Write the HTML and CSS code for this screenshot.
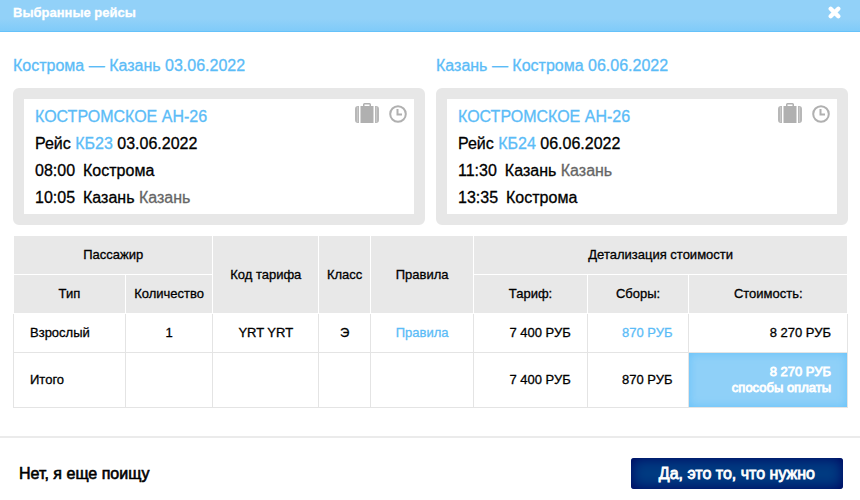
FILE: index.html
```
<!DOCTYPE html>
<html lang="ru">
<head>
  <meta charset="UTF-8" />
  <title>Выбранные рейсы</title>
  <link rel="stylesheet" href="styles.css">
</head>
<body>
  <svg class="sprite" width="0" height="0" aria-hidden="true">
    <symbol id="icon-bag" viewBox="0 0 24 20">
      <path d="M4 3v17H3a3 3 0 0 1-3-3V6a3 3 0 0 1 3-3zM20 3v17h1a3 3 0 0 0 3-3V6a3 3 0 0 0-3-3z" fill="#b8b8b8"/>
      <path d="M2.500 4v15M21.500 4v15" stroke="#c8c8c8" stroke-width="1"/>
      <path d="M5.500 3H8V1.500Q8 0 9.500 0h5Q16 0 16 1.500V3h2.500v17h-13zM9.500 3h5V1.500h-5z" fill="#b0b0b0" fill-rule="evenodd"/>
    </symbol>
    <symbol id="icon-clock" viewBox="0 0 18 18">
      <circle cx="9" cy="9" r="7.800" fill="none" stroke="#b0b0b0" stroke-width="2"/>
      <path d="M8.500 4v5.500H13" fill="none" stroke="#b0b0b0" stroke-width="2"/>
    </symbol>
  </svg>

  <header class="header">
    <h1>Выбранные рейсы</h1>
    <button class="close" aria-label="Закрыть">
      <svg width="13" height="13" viewBox="0 0 12 12"><path d="M2.500 2.500l7 7M9.500 2.500l-7 7" stroke="#fff" stroke-width="4" stroke-linecap="round"/></svg>
    </button>
  </header>

  <main class="content">
    <div class="flights">
      <section class="flight">
        <h2>Кострома — Казань 03.06.2022</h2>
        <div class="card">
          <div class="info">
            <p class="company">КОСТРОМСКОЕ АН-26</p>
            <p>Рейс <a href="#">КБ23</a> 03.06.2022</p>
            <p><span class="time">08:00</span>Кострома</p>
            <p><span class="time">10:05</span>Казань <span class="airport">Казань</span></p>
          </div>
          <div class="icons">
            <svg class="bag"><use href="#icon-bag"/></svg>
            <svg class="clock"><use href="#icon-clock"/></svg>
          </div>
        </div>
      </section>

      <section class="flight">
        <h2>Казань — Кострома 06.06.2022</h2>
        <div class="card">
          <div class="info">
            <p class="company">КОСТРОМСКОЕ АН-26</p>
            <p>Рейс <a href="#">КБ24</a> 06.06.2022</p>
            <p><span class="time">11:30</span>Казань <span class="airport">Казань</span></p>
            <p><span class="time">13:35</span>Кострома</p>
          </div>
          <div class="icons">
            <svg class="bag"><use href="#icon-bag"/></svg>
            <svg class="clock"><use href="#icon-clock"/></svg>
          </div>
        </div>
      </section>
    </div>

    <table class="prices">
      <colgroup>
        <col class="col-type">
        <col class="col-count">
        <col class="col-code">
        <col class="col-class">
        <col class="col-rules">
        <col class="col-fare">
        <col class="col-tax">
        <col class="col-total">
      </colgroup>
      <thead>
        <tr>
          <th colspan="2">Пассажир</th>
          <th rowspan="2">Код тарифа</th>
          <th rowspan="2">Класс</th>
          <th rowspan="2">Правила</th>
          <th colspan="3">Детализация стоимости</th>
        </tr>
        <tr>
          <th>Тип</th>
          <th>Количество</th>
          <th>Тариф:</th>
          <th>Сборы:</th>
          <th>Стоимость:</th>
        </tr>
      </thead>
      <tbody>
        <tr>
          <td class="name">Взрослый</td>
          <td>1</td>
          <td>YRT YRT</td>
          <td>Э</td>
          <td><a href="#">Правила</a></td>
          <td class="sum">7 400 РУБ</td>
          <td class="sum"><a href="#">870 РУБ</a></td>
          <td class="sum">8 270 РУБ</td>
        </tr>
        <tr class="total">
          <td class="name">Итого</td>
          <td></td>
          <td></td>
          <td></td>
          <td></td>
          <td class="sum">7 400 РУБ</td>
          <td class="sum">870 РУБ</td>
          <td class="sum pay">8 270 РУБ<br><a href="#">способы оплаты</a></td>
        </tr>
      </tbody>
    </table>
  </main>

  <footer class="footer">
    <button class="cancel">Нет, я еще поищу</button>
    <button class="confirm">Да, это то, что нужно</button>
  </footer>
</body>
</html>
```
FILE: styles.css
```
* {
  box-sizing: border-box;
}
body {
  margin: 0;
  font-family: "Liberation Sans", Arial, sans-serif;
  font-size: 16px;
  color: #000;
  background-color: #fff;
  -webkit-text-stroke: 0.3px;
}
a {
  color: #5bbcf7;
  text-decoration: none;
}
button {
  font-family: inherit;
  font-size: 16px;
  border: none;
  cursor: pointer;
  -webkit-text-stroke: inherit;
}
.sprite {
  position: absolute;
}
.header {
  display: flex;
  justify-content: space-between;
  align-items: center;
  height: 32px;
  padding: 0 19px 6px 13px;
  background: linear-gradient(#92d1f8 60%, #80cbf9);
  border-bottom: 1px solid #66c2fa;
}
.header h1 {
  margin: 0;
  font-size: 13px;
  color: #fff;
}
.close {
  display: flex;
  padding: 0;
  background: none;
}
.content {
  padding: 20px 12px 28px 13px;
}
.flights {
  display: flex;
  gap: 11px;
  margin-bottom: 10px;
}
.flight {
  flex: 1;
}
.flight h2 {
  margin: 0 0 9px;
  font-size: 16px;
  font-weight: normal;
  line-height: 27px;
  color: #5bbcf7;
}
.card {
  display: flex;
  justify-content: space-between;
  padding: 4px 7px 3px 11px;
  border: 11px solid #e7e7e7;
  border-radius: 6px;
}
.card p {
  margin: 0;
  line-height: 27px;
}
.card .company {
  color: #5bbcf7;
}
.time {
  margin-right: 8px;
}
.airport {
  color: #666;
}
.icons {
  display: flex;
  gap: 10px;
}
.bag {
  width: 24px;
  height: 20px;
}
.clock {
  width: 18px;
  height: 18px;
  margin-top: 2px;
}
.prices {
  width: 100%;
  table-layout: fixed;
  border-collapse: collapse;
  font-size: 13px;
  line-height: 16px;
}
.col-type { width: 13.4%; }
.col-count { width: 10.5%; }
.col-code { width: 12.7%; }
.col-class { width: 6.2%; }
.col-rules { width: 12.4%; }
.col-fare { width: 13.6%; }
.col-tax { width: 12.2%; }
.col-total { width: 19%; }
.prices th,
.prices td {
  height: 39px;
  padding: 0;
  border: 1px solid #e4e4e4;
  text-align: center;
}
.prices th {
  font-weight: normal;
  background-color: #e8e8e8;
  border-color: #fff;
}
.prices .name {
  padding-left: 16px;
  text-align: left;
}
.prices .sum {
  padding-right: 16px;
  text-align: right;
}
.prices .total td {
  height: 55px;
}
.prices .pay {
  color: #fff;
  background-color: #8fd0f8;
  box-shadow: inset 0 0 10px #66c2fa;
  -webkit-text-stroke: 0.8px;
}
.pay a {
  color: #fff;
}
.footer {
  display: flex;
  justify-content: space-between;
  align-items: center;
  padding: 20px 17px 12px 19px;
  border-top: 2px solid #ebebeb;
}
.cancel {
  padding: 0;
  color: #000;
  background: none;
  -webkit-text-stroke: 0.6px;
}
.confirm {
  padding: 0 28px;
  line-height: 31px;
  color: #fff;
  background-color: #003b82;
  box-shadow: inset 0 0 14px #00005c;
  border-radius: 3px;
  -webkit-text-stroke: 0.8px;
}
```
